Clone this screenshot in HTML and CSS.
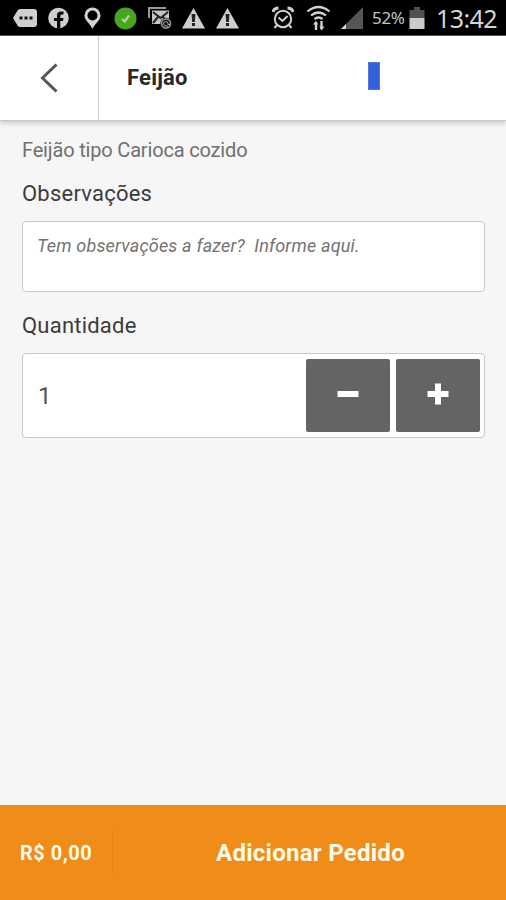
FILE: index.html
```html
<!DOCTYPE html>
<html lang="pt-BR">
<head>
<meta charset="utf-8">
<title>Feijão</title>
<link rel="stylesheet" href="styles.css">
</head>
<body>
<div class="screen">
  <div class="status">
    <div class="notifications">
      <svg class="tag" width="24" height="24" viewBox="0 0 24 24"><path fill="#cfcfcf" d="M7 3h14q3 0 3 3v12q0 3-3 3H7q-1.500 0-2.500-1.500L0 12l4.500-7.500Q5.500 3 7 3z"/><path fill="#111" d="M6.500 10.500h3v3h-3zm5 0h3v3h-3zm5 0h3v3h-3z"/></svg>
      <svg class="fb" width="21" height="24" viewBox="0 0 21 24"><circle cx="10.500" cy="12" r="10.300" fill="#cfcfcf"/><path fill="#080808" d="M9 22.500V15H6v-3h3V9.500Q9 5.500 13 5.500h2.500v3h-1.700q-1.500 0-1.500 1.500v2h3.200l-.5 3h-2.700v7.500z"/></svg>
      <svg class="pin" width="17" height="24" viewBox="0 0 17 24"><path fill="#d2d2d2" fill-rule="evenodd" d="M8.500 1.500a8 8 0 0 1 8 8c0 5.500-5.500 7.500-8 13.500-2.500-6-8-8-8-13.500a8 8 0 0 1 8-8zm0 3a5 5 0 1 0 0 10 5 5 0 0 0 0-10z"/></svg>
      <svg class="check" width="23" height="24" viewBox="0 0 23 24"><circle cx="11.500" cy="12.500" r="11" fill="#48a51f"/><path d="M8 13l2.700 2.500 4.300-6" fill="none" stroke="#b0d795" stroke-width="2.200"/></svg>
      <svg class="mail" width="24" height="24" viewBox="0 0 24 24"><path d="M1 12V2h17" fill="none" stroke="#999" stroke-width="2"/><path fill="#c5c5c5" d="M4 4.500h17V18H4z"/><path d="M5 6l7.500 6L20 6M5 17l5-6M20 17l-5-6" fill="none" stroke="#222" stroke-width="2"/><circle cx="18" cy="17.500" r="5.800" fill="#111"/><circle cx="18" cy="17.500" r="4.500" fill="none" stroke="#999" stroke-width="1.500"/><path d="M20 20h-2a2.200 2.200 0 1 1 2-2.500v1h2" fill="none" stroke="#aaa"/></svg>
      <svg class="warn" width="23" height="24" viewBox="0 0 23 24"><path fill="#cfcfcf" d="M11.500 2L23 22.500H0z"/><path fill="#222" d="M9.500 8h4l-.7 8h-2.600zm.5 9h3v3h-3z"/></svg>
      <svg class="warn" width="23" height="24" viewBox="0 0 23 24"><path fill="#cfcfcf" d="M11.500 2L23 22.500H0z"/><path fill="#222" d="M9.500 8h4l-.7 8h-2.600zm.5 9h3v3h-3z"/></svg>
    </div>
    <div class="system">
      <svg class="alarm" width="22" height="24" viewBox="0 0 22 24"><g fill="none" stroke="#d0d0d0" stroke-width="2"><circle cx="11" cy="13" r="8.200"/><path d="M6.500 11.500l4 3.500 5-5" /><path d="M1 6q1-4 5.500-4M21 6q-1-4-5.500-4" stroke-width="3"/><path d="M5 19l-2.500 3M17 19l2.500 3"/></g></svg>
      <svg class="wifi" width="25" height="26" viewBox="0 0 25 26"><g fill="none" stroke="#d2d2d2" stroke-width="2.200"><path d="M1.500 6.500q11-9 22 0M5 10.500q7.500-6 15 0M8.500 14q4-3 8 0"/><path d="M10 25v-8M15.500 16v8" stroke-width="2.400"/></g><path fill="#d2d2d2" d="M6.800 19.500L10 16l2.200 3.500zM13.300 21.500h5.200L15.500 25.500z"/></svg>
      <svg class="signal" width="22" height="24" viewBox="0 0 22 24"><path fill="#555" d="M22 1v22H0z"/><path fill="#d5d5d5" d="M5 18v5H0z"/></svg>
      <span class="percent">52%</span>
      <svg class="battery" width="16" height="24" viewBox="0 0 16 24"><path fill="#505050" d="M5 1h6v3h4.500v8H.5V4H5z"/><path fill="#cbcbcb" d="M.5 12h15v11H.5z"/></svg>
      <span class="clock">13:42</span>
    </div>
  </div>
  <header class="header">
    <div class="back"><svg width="18" height="30" viewBox="0 0 18 30"><path d="M16.500 1.500L2.500 15l14 13.500" fill="none" stroke="#555" stroke-width="3"/></svg></div>
    <h1>Feijão</h1>
    <div class="marker"></div>
  </header>
  <main class="content">
    <p class="description">Feijão tipo Carioca cozido</p>
    <h2>Observações</h2>
    <div class="notes">Tem observações a fazer?&nbsp; Informe aqui.</div>
    <h2 class="quantity-title">Quantidade</h2>
    <div class="quantity">
      <span class="value">1</span>
      <div class="step"><svg width="22" height="22" viewBox="0 0 22 22"><path fill="#fff" d="M.5 8h21v6H.5z"/></svg></div>
      <div class="step"><svg width="22" height="22" viewBox="0 0 22 22"><path fill="#fff" d="M8 .5h6V8h7.500v6H14v7.500H8V14H.5V8H8z"/></svg></div>
    </div>
  </main>
  <footer class="footer">
    <div class="price">R$ 0,00</div>
    <div class="divider"></div>
    <div class="add">Adicionar Pedido</div>
  </footer>
</div>
</body>
</html>
```
FILE: styles.css
```css
* { box-sizing: border-box; }
body { margin: 0; font-family: Roboto, "Liberation Sans", sans-serif; color: #3c3c3c; }
h1, h2, p { margin: 0; }
svg { display: block; flex: none; }
.screen { width: 506px; height: 900px; display: flex; flex-direction: column; background: #f6f6f6; overflow: hidden; }
.status { height: 36px; flex: none; display: flex; justify-content: space-between; background: #000; border-bottom: 1px solid #555; padding: 0 9px 0 13px; }
.notifications, .system { display: flex; align-items: center; }
.fb { margin-left: 11px; }
.pin { margin-left: 15px; }
.check { margin-left: 13px; }
.mail { margin-left: 11px; }
.warn { margin-left: 10px; }
.warn + .warn { margin-left: 11px; }
.wifi { margin-left: 12px; }
.signal { margin-left: 10px; }
.percent { width: 37px; margin-left: 9px; font: 17px/24px "Noto Sans", sans-serif; letter-spacing: -.3px; color: #c5c5c5; padding-top: 1px; }
.clock { width: 61px; margin-left: 11px; font: 25px/34px "Noto Sans", sans-serif; letter-spacing: -.6px; color: #d4d4d4; }
.header { height: 85px; flex: none; display: flex; align-items: center; background: #fff; border-bottom: 1px solid #c9c9c9; box-shadow: 0 2px 5px #0003; }
.back { width: 99px; height: 84px; padding-left: 40px; border-right: 1px solid #ccc; display: flex; align-items: center; }
h1 { width: 269px; padding-left: 28px; font-size: 22px; line-height: 30px; font-weight: 700; letter-spacing: .2px; color: #292929; }
.marker { width: 12px; height: 28px; margin-bottom: 4px; background: #335fd8; border: 1px solid #547ae0; }
.content { flex: 1; padding: 15px 21px 0 22px; }
.description { font-size: 20px; line-height: 28px; letter-spacing: -.17px; color: #707070; }
h2 { margin-top: 15px; font-size: 22px; line-height: 30px; font-weight: 400; letter-spacing: .22px; }
.notes { height: 71px; margin-top: 12px; padding: 12px 14px; background: #fff; border: 1px solid #c9c9c9; border-radius: 4px; font-size: 18px; line-height: 24px; letter-spacing: .18px; font-style: italic; color: #737373; }
.quantity-title { margin-top: 19px; }
.quantity { height: 85px; margin-top: 12px; padding: 0 4px 0 15px; display: flex; align-items: center; gap: 6px; background: #fff; border: 1px solid #c9c9c9; border-radius: 4px; }
.value { flex: 1; font-size: 24px; line-height: 30px; color: #555; }
.step { width: 84px; height: 73px; padding-bottom: 4px; display: flex; align-items: center; justify-content: center; background: #646464; border-radius: 2px; }
.footer { height: 95px; flex: none; display: flex; align-items: center; background: #ef8d18; border-top: 1px solid #e58a1c; color: #fffbea; font-weight: 700; }
.price { width: 112px; padding-left: 20px; font-size: 20px; line-height: 30px; letter-spacing: .5px; }
.divider { width: 1px; height: 44px; background: #e2861a; }
.add { flex: 1; padding-left: 103px; font-size: 24px; line-height: 30px; letter-spacing: .27px; }
```
